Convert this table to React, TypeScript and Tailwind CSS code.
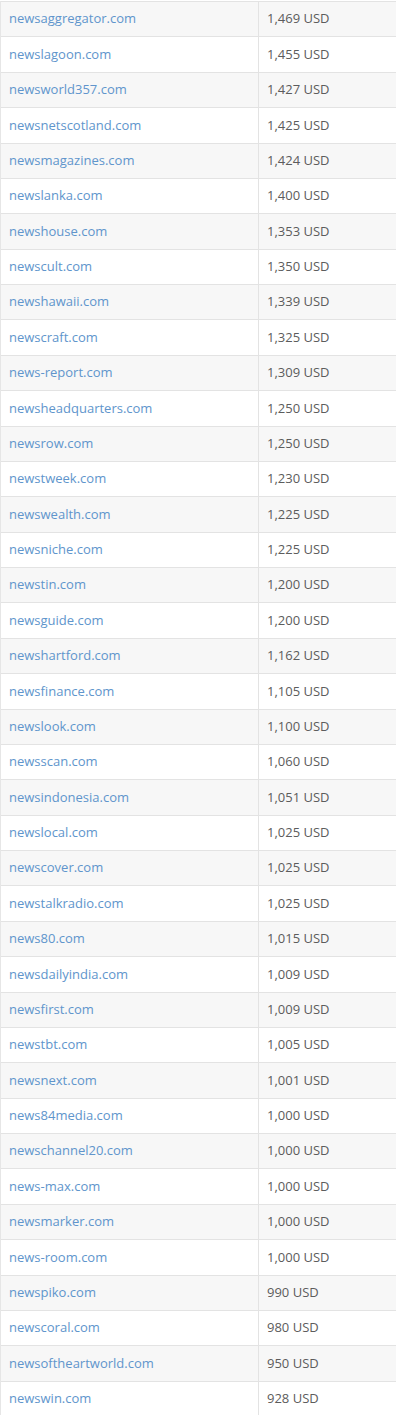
import React from "react";

const rows: [string, string][] = [
  ["newsaggregator.com", "1,469 USD"],
  ["newslagoon.com", "1,455 USD"],
  ["newsworld357.com", "1,427 USD"],
  ["newsnetscotland.com", "1,425 USD"],
  ["newsmagazines.com", "1,424 USD"],
  ["newslanka.com", "1,400 USD"],
  ["newshouse.com", "1,353 USD"],
  ["newscult.com", "1,350 USD"],
  ["newshawaii.com", "1,339 USD"],
  ["newscraft.com", "1,325 USD"],
  ["news-report.com", "1,309 USD"],
  ["newsheadquarters.com", "1,250 USD"],
  ["newsrow.com", "1,250 USD"],
  ["newstweek.com", "1,230 USD"],
  ["newswealth.com", "1,225 USD"],
  ["newsniche.com", "1,225 USD"],
  ["newstin.com", "1,200 USD"],
  ["newsguide.com", "1,200 USD"],
  ["newshartford.com", "1,162 USD"],
  ["newsfinance.com", "1,105 USD"],
  ["newslook.com", "1,100 USD"],
  ["newsscan.com", "1,060 USD"],
  ["newsindonesia.com", "1,051 USD"],
  ["newslocal.com", "1,025 USD"],
  ["newscover.com", "1,025 USD"],
  ["newstalkradio.com", "1,025 USD"],
  ["news80.com", "1,015 USD"],
  ["newsdailyindia.com", "1,009 USD"],
  ["newsfirst.com", "1,009 USD"],
  ["newstbt.com", "1,005 USD"],
  ["newsnext.com", "1,001 USD"],
  ["news84media.com", "1,000 USD"],
  ["newschannel20.com", "1,000 USD"],
  ["news-max.com", "1,000 USD"],
  ["newsmarker.com", "1,000 USD"],
  ["news-room.com", "1,000 USD"],
  ["newspiko.com", "990 USD"],
  ["newscoral.com", "980 USD"],
  ["newsoftheartworld.com", "950 USD"],
  ["newswin.com", "928 USD"],
];

export default function App() {
  return (
    <div className="w-[396px] h-[1415px] overflow-hidden bg-white pt-px font-['Open_Sans',sans-serif] text-[13px]">
      <div className="border-l border-[#e6e6e6]">
        {rows.map(([domain, price], i) => (
          <div
            key={domain}
            className={`flex h-[35.38px] border-t border-[#e3e3e3] ${
              i % 2 === 0 ? "bg-[#f7f7f7]" : "bg-white"
            }`}
          >
            <div className="w-[258px] shrink-0 border-r border-[#e3e3e3] px-2 flex items-center">
              <a className="text-[#6095cc]" href="#">
                {domain}
              </a>
            </div>
            <div className="flex-1 px-2 flex items-center text-[#5c5c5c]">{price}</div>
          </div>
        ))}
      </div>
    </div>
  );
}
